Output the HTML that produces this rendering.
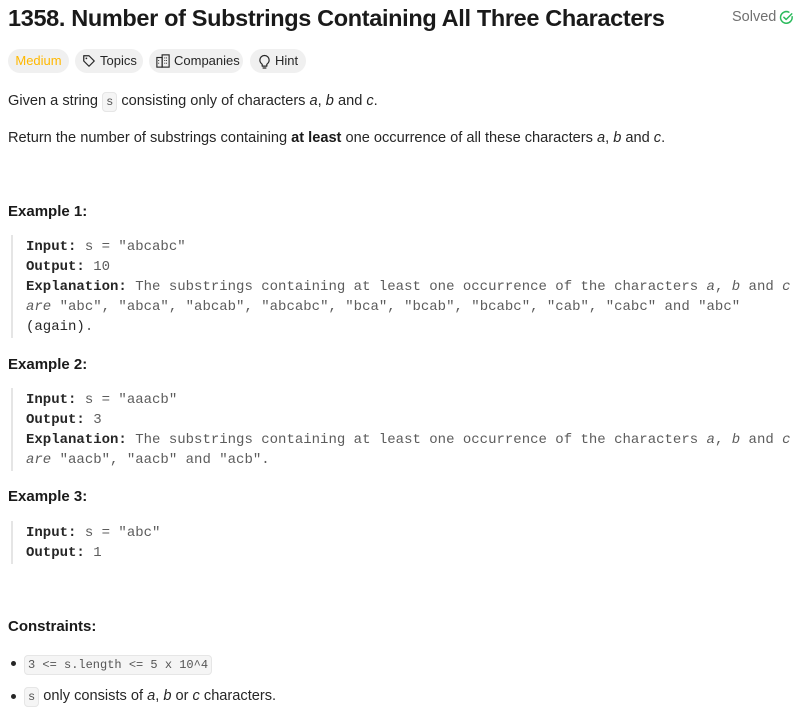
<!DOCTYPE html>
<html><head><meta charset="utf-8"><style>
body{margin:0;width:803px;height:716px;background:#fff;font-family:"Liberation Sans",sans-serif;color:#262626;position:relative;overflow:hidden}
.a{position:absolute;white-space:nowrap}
.t{font-size:23.5px;font-weight:bold;left:8px;top:5px;color:#1a1a1a;letter-spacing:-0.35px}
.p{font-size:14.6px;left:8px;line-height:20px}
.h{font-size:15px;font-weight:bold;left:8px;line-height:20px;color:#1a1a1a}
.m{font-family:"Liberation Mono",monospace;font-size:14px;left:26px;line-height:20px;color:#5c5c5c}
.m b{color:#262626}
.pill{position:absolute;top:49px;height:24px;border-radius:12px;background:#f0f0f0;font-size:13px;line-height:24px;text-align:center;color:#262626}
.bar{position:absolute;left:11px;width:2px;background:#e5e5e5}
code{font-family:"Liberation Mono",monospace;font-size:12px;background:#f5f5f5;border:1px solid #e6e6e6;border-radius:4px;padding:2px 3px;color:#555}
.dot{position:absolute;left:11px;width:5px;height:5px;border-radius:50%;background:#262626}
</style></head><body>
<div class="a t">1358. Number of Substrings Containing All Three Characters</div>
<div class="a" style="left:732px;top:9px;font-size:14.5px;color:#707070">Solved</div>
<svg class="a" style="left:779px;top:10px" width="15" height="15" viewBox="0 0 16 16"><path d="M14 7.2A6.2 6.2 0 1 1 10.5 2.3" fill="none" stroke="#2cbb5d" stroke-width="1.6" stroke-linecap="round"/><path d="M5.2 7.8l2.4 2.3 6-6" fill="none" stroke="#2cbb5d" stroke-width="1.6" stroke-linecap="round" stroke-linejoin="round"/></svg>
<div class="pill" style="left:8px;width:61px;color:#ffb800">Medium</div>
<div class="pill" style="left:75px;width:68px;text-align:left"><svg style="position:absolute;left:7px;top:5px" width="14" height="14" viewBox="0 0 16 16"><path d="M2 2h6l6 6-6 6-6-6z" fill="none" stroke="#262626" stroke-width="1.4" stroke-linejoin="round"/><circle cx="5" cy="5" r="1" fill="#262626"/></svg><span style="position:absolute;left:25px">Topics</span></div>
<div class="pill" style="left:149px;width:94px;text-align:left"><svg style="position:absolute;left:7px;top:5px" width="14" height="14" viewBox="0 0 16 16"><rect x="1" y="4" width="6" height="11" fill="none" stroke="#262626" stroke-width="1.3"/><rect x="7" y="1" width="8" height="14" fill="none" stroke="#262626" stroke-width="1.3"/><path d="M3 7v1M3 10v1M10 4v1M12 4v1M10 7v1M12 7v1M10 10v1M12 10v1" stroke="#262626" stroke-width="1.2"/></svg><span style="position:absolute;left:25px">Companies</span></div>
<div class="pill" style="left:250px;width:56px;text-align:left"><svg style="position:absolute;left:8px;top:5px" width="13" height="15" viewBox="0 0 14 16"><path d="M4.5 11C3 9.8 2 8.3 2 6.5a5 5 0 0 1 10 0c0 1.8-1 3.3-2.5 4.5V13h-5z M5 15h4" fill="none" stroke="#262626" stroke-width="1.3" stroke-linejoin="round"/></svg><span style="position:absolute;left:25px">Hint</span></div>

<div class="a p" style="top:91px">Given a string <code>s</code> consisting only of characters <i>a</i>, <i>b</i> and <i>c</i>.</div>
<div class="a p" style="top:128px">Return the number of substrings containing <b style="color:#1a1a1a">at least</b> one occurrence of all these characters <i>a</i>, <i>b</i> and <i>c</i>.</div>

<div class="a h" style="top:202px">Example 1:</div>
<div class="bar" style="top:235px;height:103px"></div>
<div class="a m" style="top:237px"><b>Input:</b> s = "abcabc"<br><b>Output:</b> 10<br><b>Explanation:</b> The substrings containing at least one occurrence of the characters <i>a</i>, <i>b</i> and <i>c</i><br><i>are</i> "abc", "abca", "abcab", "abcabc", "bca", "bcab", "bcabc", "cab", "cabc" and "abc"<br><b style="font-weight:normal">(again)</b>.</div>

<div class="a h" style="top:355px">Example 2:</div>
<div class="bar" style="top:388px;height:83px"></div>
<div class="a m" style="top:390px"><b>Input:</b> s = "aaacb"<br><b>Output:</b> 3<br><b>Explanation:</b> The substrings containing at least one occurrence of the characters <i>a</i>, <i>b</i> and <i>c</i><br><i>are</i> "aacb", "aacb" and "acb".</div>

<div class="a h" style="top:487px">Example 3:</div>
<div class="bar" style="top:521px;height:43px"></div>
<div class="a m" style="top:523px"><b>Input:</b> s = "abc"<br><b>Output:</b> 1</div>

<div class="a h" style="top:617px">Constraints:</div>
<div class="dot" style="top:661px"></div>
<div class="a p" style="left:24px;top:654px"><code>3 &lt;= s.length &lt;= 5 x 10^4</code></div>
<div class="dot" style="top:694px"></div>
<div class="a p" style="left:24px;top:686px"><code>s</code> only consists of <i>a</i>, <i>b</i> or <i>c</i> characters.</div>
</body></html>
